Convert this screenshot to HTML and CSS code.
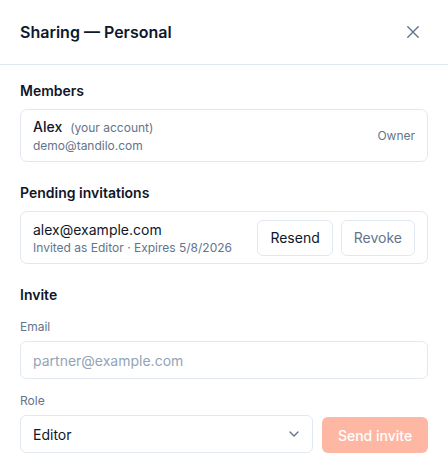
FILE: index.html
```html
<!DOCTYPE html>
<html lang="en">
<head>
<meta charset="utf-8">
<title>Sharing — Personal</title>
<link rel="stylesheet" href="styles.css">
</head>
<body>
<div class="dialog">
  <header class="header">
    <h1 class="title">Sharing — Personal</h1>
    <button class="close" type="button" aria-label="Close">
      <svg width="12" height="12" viewBox="0 0 12 12" fill="none" stroke="#64748b" stroke-width="1.4" stroke-linecap="round"><path d="M0.8 0.8 11.2 11.2M11.2 0.8 0.8 11.2"/></svg>
    </button>
  </header>
  <main class="content">
    <section class="section">
      <h2 class="heading">Members</h2>
      <div class="card">
        <div class="info">
          <div class="primary"><span class="name">Alex</span><span class="note">(your account)</span></div>
          <div class="secondary">demo@tandilo.com</div>
        </div>
        <div class="role-tag">Owner</div>
      </div>
    </section>
    <section class="section">
      <h2 class="heading">Pending invitations</h2>
      <div class="card card-actions">
        <div class="info">
          <div class="primary">alex@example.com</div>
          <div class="secondary">Invited as Editor · Expires 5/8/2026</div>
        </div>
        <div class="actions">
          <button class="btn" type="button">Resend</button>
          <button class="btn btn-muted" type="button">Revoke</button>
        </div>
      </div>
    </section>
    <section class="section">
      <h2 class="heading heading-form">Invite</h2>
      <label class="label" for="email">Email</label>
      <input class="input" id="email" type="email" placeholder="partner@example.com">
      <label class="label label-gap" for="role">Role</label>
      <div class="row">
        <div class="select">
          <span>Editor</span>
          <svg width="16" height="16" viewBox="0 0 24 24" fill="none" stroke="#64748b" stroke-width="2" stroke-linecap="round" stroke-linejoin="round"><path d="m6 9 6 6 6-6"/></svg>
        </div>
        <button class="send" type="button">Send invite</button>
      </div>
    </section>
  </main>
</div>
</body>
</html>
```

FILE: styles.css
```css
* { box-sizing: border-box; }
html, body {
  margin: 0;
  padding: 0;
  background: #ffffff;
}
body {
  font-family: Inter, "Liberation Sans", sans-serif;
  color: #0f172a;
  width: 448px;
  height: 469px;
  overflow: hidden;
}
.dialog {
  display: flex;
  flex-direction: column;
}
.header {
  height: 65px;
  padding: 0 20px;
  border-bottom: 1px solid #e2e8f0;
  display: flex;
  align-items: center;
  justify-content: space-between;
}
.title {
  margin: 0;
  font-size: 16px;
  line-height: 24px;
  font-weight: 600;
  color: #0f172a;
  margin-top: -1px;
}
.close {
  width: 32px;
  height: 32px;
  margin-right: -1px;
  border: 0;
  background: transparent;
  padding: 0;
  display: flex;
  align-items: center;
  justify-content: center;
  margin-top: -1px;
}
.content {
  padding: 16px 20px 0;
  display: flex;
  flex-direction: column;
  gap: 21px;
}
.section {
  display: flex;
  flex-direction: column;
}
.heading {
  margin: 0 0 8px;
  font-size: 14px;
  line-height: 20px;
  font-weight: 600;
  color: #0f172a;
}
.heading-form { margin-bottom: 14px; }
.card {
  border: 1px solid #e2e8f0;
  border-radius: 7px;
  padding: 0 12px;
  display: flex;
  align-items: center;
  justify-content: space-between;
  height: 53px;
}
.info {
  display: flex;
  flex-direction: column;
}
.primary {
  font-size: 14px;
  line-height: 20px;
  color: #0f172a;
  display: flex;
  align-items: baseline;
}
.name { font-weight: 500; }
.note {
  font-size: 12px;
  color: #64748b;
  margin-left: 8px;
}
.secondary {
  font-size: 12px;
  line-height: 16px;
  color: #64748b;
}
.role-tag {
  font-size: 12px;
  line-height: 16px;
  color: #64748b;
}
.actions {
  display: flex;
  gap: 8px;
}
.btn {
  height: 36px;
  padding: 0 12px;
  border: 1px solid #e2e8f0;
  border-radius: 6px;
  background: #ffffff;
  font-family: inherit;
  font-size: 14px;
  font-weight: 400;
  color: #0f172a;
}
.btn-muted { color: #64748b; }
.label {
  display: block;
  font-size: 12px;
  line-height: 16px;
  color: #64748b;
  margin-bottom: 6px;
}
.label-gap { margin-top: 14px; }
.input {
  height: 38px;
  width: 100%;
  border: 1px solid #e2e8f0;
  border-radius: 6px;
  padding: 0 12px;
  font-family: inherit;
  font-size: 14px;
  color: #0f172a;
  outline: none;
}
.input::placeholder { color: #94a3b8; }
.row {
  display: flex;
  align-items: flex-end;
  gap: 9px;
}
.select {
  flex: 1;
  height: 38px;
  border: 1px solid #e2e8f0;
  border-radius: 6px;
  padding: 0 10px 0 12px;
  display: flex;
  align-items: center;
  justify-content: space-between;
  font-size: 14px;
  color: #0f172a;
}
.send {
  height: 36px;
  width: 106px;
  padding: 0;
  border: 0;
  border-radius: 6px;
  background: #fdb7a2;
  color: #ffffff;
  font-family: inherit;
  font-size: 14px;
  font-weight: 500;
}
```
